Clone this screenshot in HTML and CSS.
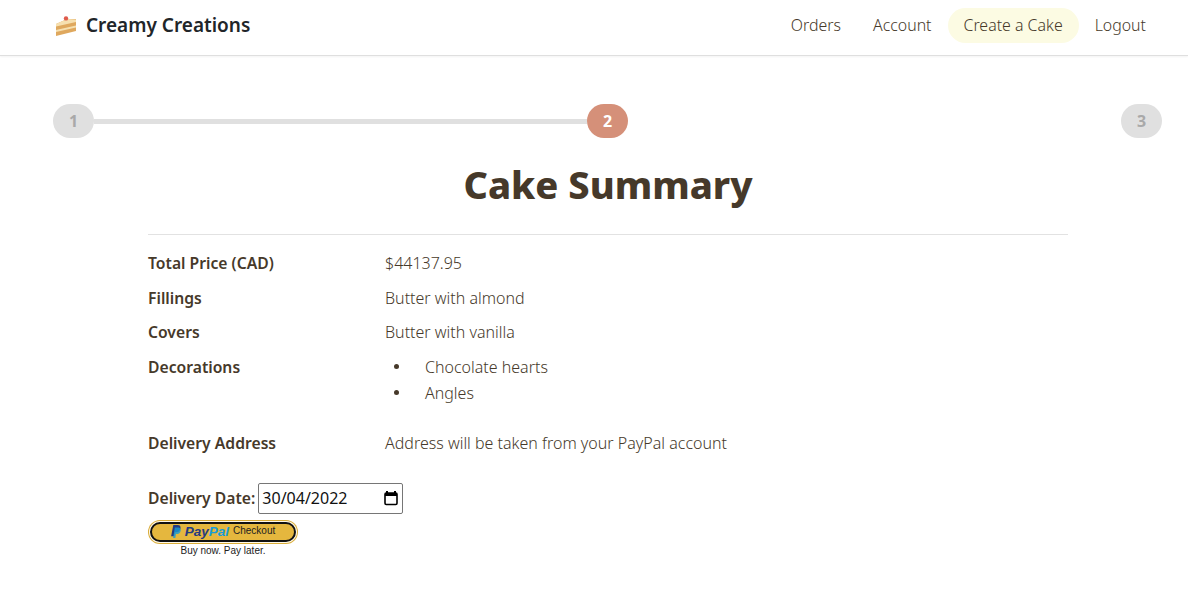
FILE: index.html
```html
<!DOCTYPE html>
<html lang="en">
<head>
    <meta charset="UTF-8">
    <title>Creamy Creations - Cake Summary</title>
    <link rel="stylesheet" href="styles.css">
</head>
<body>

    <!-- Navigation -->
    <header class="navbar">
        <a class="brand" href="#">
            <svg class="brand-icon" width="22" height="20" viewBox="0 0 22 20">
                <path d="M1 8 L12 3 L21 3 L21 15 L1 20 Z" fill="#dfa85e"/>
                <path d="M1 8 L12 3 L21 3.5 L21 6 L1 10.5 Z" fill="#f6e0b0"/>
                <path d="M1 14 L21 9.5 L21 11.5 L1 16 Z" fill="#f6e0b0"/>
                <circle cx="11" cy="2.4" r="2.2" fill="#df5b4c"/>
            </svg>
            <span>Creamy Creations</span>
        </a>
        <nav class="nav-links">
            <a href="#">Orders</a>
            <a href="#">Account</a>
            <a class="active" href="#">Create a Cake</a>
            <a href="#">Logout</a>
        </nav>
    </header>

    <!-- Steps -->
    <div class="stepper">
        <div class="step">1</div>
        <div class="step-line"></div>
        <div class="step current">2</div>
        <div class="step-line blank"></div>
        <div class="step">3</div>
    </div>

    <!-- Summary -->
    <main class="summary">
        <h1>Cake Summary</h1>
        <hr>
        <div class="row">
            <div class="label">Total Price (CAD)</div>
            <div>$44137.95</div>
        </div>
        <div class="row">
            <div class="label">Fillings</div>
            <div>Butter with almond</div>
        </div>
        <div class="row">
            <div class="label">Covers</div>
            <div>Butter with vanilla</div>
        </div>
        <div class="row">
            <div class="label">Decorations</div>
            <ul class="decorations">
                <li>Chocolate hearts</li>
                <li>Angles</li>
            </ul>
        </div>
        <div class="row">
            <div class="label">Delivery Address</div>
            <div>Address will be taken from your PayPal account</div>
        </div>

        <div class="date-row">
            <label class="label" for="deliveryDate">Delivery Date:</label>
            <div class="date-box">
                <input type="text" id="deliveryDate" value="30/04/2022">
                <svg width="16" height="16" viewBox="0 0 16 16">
                    <path d="M4 1 V3 M12 1 V3" stroke="#000" stroke-width="2" fill="none"/>
                    <rect x="2" y="3" width="12" height="11.5" rx="1.2" fill="none" stroke="#000" stroke-width="1.6"/>
                    <rect x="2" y="3" width="12" height="3" fill="#000"/>
                </svg>
            </div>
        </div>

        <div class="paypal">
            <button class="paypal-button" type="button">
                <svg width="10" height="13" viewBox="0 0 9 12">
                    <path d="M2 0 H6 C8.4 0 9 1.6 8.6 3.4 C8.1 5.6 6.6 6.6 4.6 6.6 H3.4 L2.8 10.4 H0 Z" fill="#253b80"/>
                    <path d="M3.4 2.2 H7 C9 2.8 9.2 4.4 8.6 6 C8 7.6 6.8 8.4 5 8.4 H4.4 L3.9 12 H1.8 Z" fill="#179bd7" opacity="0.8"/>
                </svg>
                <span class="pp-word"><span class="pp-dark">Pay</span><span class="pp-light">Pal</span></span>
                <span class="pp-checkout">Checkout</span>
            </button>
            <div class="paypal-tag">Buy now. Pay later.</div>
        </div>
    </main>

</body>
</html>
```

FILE: styles.css
```css
/* General */
body {
    font-family: 'Noto Sans', Arial, sans-serif;
    margin: 0;
    padding: 0;
    background-color: #ffffff;
    color: #46392a;
    font-size: 16px;
    font-weight: 300;
}

a {
    text-decoration: none;
    color: inherit;
}

/* Navigation */
.navbar {
    display: flex;
    align-items: center;
    justify-content: space-between;
    box-sizing: content-box;
    height: 50px;
    padding: 0 26px 5px 55px;
    border-bottom: 1px solid #dfdfdf;
    box-shadow: 0 1px 2px rgba(0, 0, 0, 0.05);
}

.brand {
    display: flex;
    align-items: center;
    gap: 9px;
    font-size: 19px;
    font-weight: 600;
    color: #212529;
}

.brand-icon {
    margin-top: 1px;
}

.nav-links {
    display: flex;
    align-items: center;
    font-size: 15.9px;
}

.nav-links a {
    padding: 8px 16px;
    border-radius: 18px;
    line-height: 19px;
}

.nav-links a.active {
    background-color: #fcfbe3;
}

/* Steps */
.stepper {
    display: flex;
    align-items: center;
    margin: 48px 26px 0 53px;
}

.step {
    width: 41px;
    height: 34px;
    border-radius: 17px;
    background-color: #e0e0e0;
    color: #a9a9a9;
    font-weight: 700;
    text-align: center;
    line-height: 34px;
}

.step.current {
    background-color: #d59079;
    color: #ffffff;
}

.step-line {
    flex: 1;
    height: 5px;
    background-color: #e0e0e0;
}

.step-line.blank {
    background-color: transparent;
}

/* Summary */
.summary {
    width: 920px;
    margin-left: 148px;
}

.summary h1 {
    margin: 19px 0 0;
    font-size: 38px;
    line-height: 54px;
    font-weight: 800;
    text-align: center;
}

.summary hr {
    margin: 23px 0 11px;
    border: 0;
    border-top: 1px solid #e2e2e2;
}

.row {
    display: grid;
    grid-template-columns: 237px 1fr;
    line-height: 24px;
    padding: 5px 0 5.5px;
}

.label {
    font-size: 15.7px;
    font-weight: 600;
}

.decorations {
    margin: -1px 0 15px;
    padding-left: 9px;
    list-style: none;
}

.decorations li {
    display: flex;
    align-items: center;
    gap: 26px;
    line-height: 26px;
}

.decorations li::before {
    content: "";
    width: 5px;
    height: 5px;
    border-radius: 50%;
    background-color: #46392a;
}

.date-row {
    display: flex;
    align-items: center;
    gap: 3px;
    margin-top: 22px;
}

.date-box {
    display: flex;
    align-items: center;
    width: 145px;
    height: 31px;
    box-sizing: border-box;
    padding: 0 3px;
    border: 1px solid #767676;
    border-radius: 2px;
}

#deliveryDate {
    flex: 1;
    min-width: 0;
    padding: 0;
    border: 0;
    outline: 0;
    font-family: inherit;
    font-size: 16px;
    font-weight: 400;
    color: #111111;
}

/* PayPal */
.paypal {
    width: 150px;
    margin-top: 8px;
    text-align: center;
}

.paypal-button {
    display: flex;
    align-items: center;
    justify-content: center;
    gap: 4px;
    box-sizing: border-box;
    width: 146px;
    height: 20px;
    margin: 2px 2px 0;
    padding: 0;
    border: 2px solid #111111;
    border-radius: 10px;
    box-shadow: 0 0 0 1px #fff8e6, 0 0 0 2px #d9ad3a;
    background-color: #e5b73e;
    font-family: 'Liberation Sans', Arial, sans-serif;
}

.pp-word {
    font-size: 13.5px;
    font-weight: 700;
    font-style: italic;
}

.pp-dark {
    color: #253b80;
}

.pp-light {
    color: #179bd7;
}

.pp-checkout {
    font-size: 10px;
    font-weight: 400;
    color: #222222;
    margin-bottom: 2px;
}

.paypal-tag {
    margin-top: 3px;
    font-family: 'Liberation Sans', Arial, sans-serif;
    font-size: 10px;
    font-weight: 400;
    line-height: 12px;
    color: #222222;
}
```
